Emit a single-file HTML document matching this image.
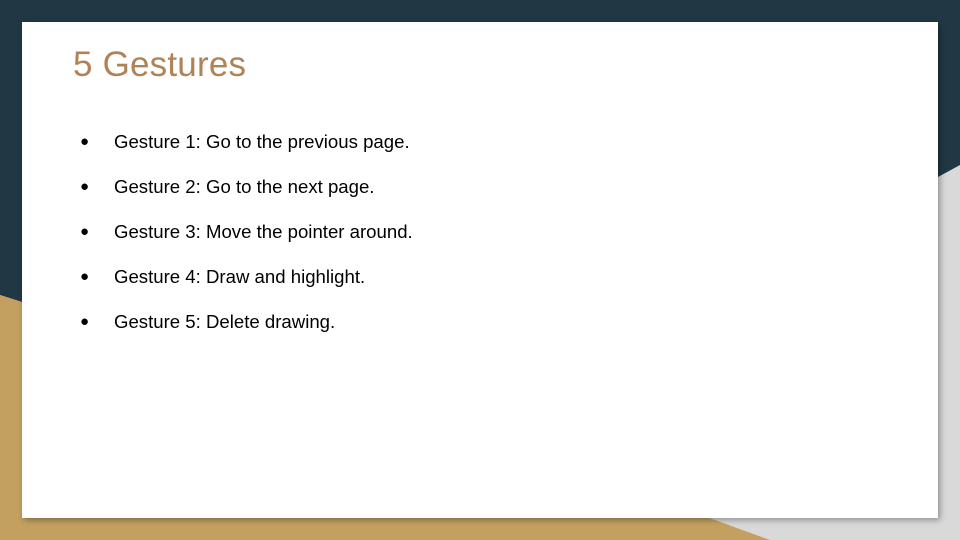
<!DOCTYPE html>
<html><head><style>
body{margin:0;width:960px;height:540px;overflow:hidden;position:relative;background:#d9d9d9;font-family:"Liberation Sans",sans-serif}
svg.bg{position:absolute;left:0;top:0}
.card{position:absolute;left:22px;top:22px;width:916px;height:496px;background:#fff;box-shadow:2px 2px 6px rgba(0,0,0,.35)}
h1{position:absolute;left:73px;top:45px;margin:0;font-weight:normal;font-size:35px;color:#b08257;letter-spacing:0.2px}
.li{position:absolute;left:114px;font-size:18.6px;color:#000}
.li:before{content:"●";position:absolute;left:-34px;font-size:15px;top:2px}
</style></head><body>
<svg class="bg" width="960" height="540">
<polygon points="0,0 960,0 960,165 938,177 500,250 22,302 0,295" fill="#213844"/>
<polygon points="0,295 22,302 500,200 660,500 770,540 0,540" fill="#c4a060"/>
</svg>
<div class="card"></div>
<h1>5 Gestures</h1>
<div class="li" style="top:131px">Gesture 1: Go to the previous page.</div>
<div class="li" style="top:176px">Gesture 2: Go to the next page.</div>
<div class="li" style="top:221px">Gesture 3: Move the pointer around.</div>
<div class="li" style="top:266px">Gesture 4: Draw and highlight.</div>
<div class="li" style="top:311px">Gesture 5: Delete drawing.</div>
</body></html>
